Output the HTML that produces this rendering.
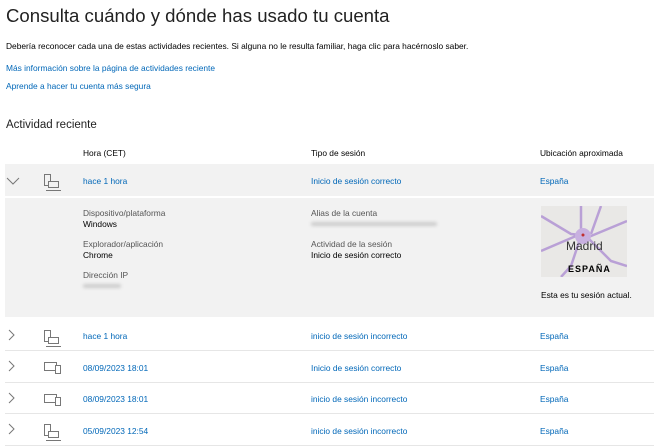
<!DOCTYPE html>
<html><head><meta charset="utf-8"><style>
body{margin:0;width:654px;height:446px;overflow:hidden;background:#fff;font-family:"Liberation Sans",sans-serif;color:#000;position:relative}
.a{position:absolute;white-space:nowrap}
.t{font-size:8.4px}
.l{color:#0067b8}
.g{color:#555}
.bg{position:absolute;left:5px;width:649px;background:#f2f2f2}
.line{position:absolute;left:5px;width:649px;height:1px;background:#e6e6e6}
.blur{position:absolute;height:4px;background:#ccc;filter:blur(1.5px);border-radius:2px}
</style></head><body>
<div class="a" style="left:6px;top:5px;font-size:18.6px;color:#222">Consulta cuándo y dónde has usado tu cuenta</div>
<div class="a t" style="left:6px;top:41px">Debería reconocer cada una de estas actividades recientes. Si alguna no le resulta familiar, haga clic para hacérnoslo saber.</div>
<div class="a t l" style="left:6px;top:63px">Más información sobre la página de actividades reciente</div>
<div class="a t l" style="left:6px;top:81px">Aprende a hacer tu cuenta más segura</div>
<div class="a" style="left:6px;top:119px;font-size:11.5px;color:#222">Actividad reciente</div>
<div class="a t" style="left:83px;top:148px">Hora (CET)</div>
<div class="a t" style="left:311px;top:148px">Tipo de sesión</div>
<div class="a t" style="left:540px;top:148px">Ubicación aproximada</div>
<div class="bg" style="top:164px;height:32px"></div>
<div class="bg" style="top:198px;height:119px"></div>
<svg class="a" style="left:6px;top:176px" width="14" height="10"><path d="M1 2l6 6 6-6" fill="none" stroke="#777" stroke-width="1"/></svg>
<div class="a t l" style="left:83px;top:176px">hace 1 hora</div>
<div class="a t l" style="left:311px;top:176px">Inicio de sesión correcto</div>
<div class="a t l" style="left:540px;top:176px">España</div>
<div class="a t g" style="left:83px;top:208px">Dispositivo/plataforma</div>
<div class="a t" style="left:83px;top:219px">Windows</div>
<div class="a t g" style="left:83px;top:239px">Explorador/aplicación</div>
<div class="a t" style="left:83px;top:250px">Chrome</div>
<div class="a t g" style="left:83px;top:270px">Dirección IP</div>
<div class="blur" style="left:83px;top:284px;width:38px"></div>
<div class="a t g" style="left:311px;top:208px">Alias de la cuenta</div>
<div class="blur" style="left:311px;top:222px;width:126px"></div>
<div class="a t g" style="left:311px;top:239px">Actividad de la sesión</div>
<div class="a t" style="left:311px;top:250px">Inicio de sesión correcto</div>
<div class="a" style="left:541px;top:206px;width:86px;height:71px;background:#e9e8e6;overflow:hidden">
<svg width="86" height="71"><g fill="none" stroke="#b9a0d6" stroke-width="2.5"><path d="M0 10 L30 28 L50 30 L86 15"/><path d="M40 0 L40 30 L30 60 L20 71"/><path d="M45 30 L70 55 L86 60"/><path d="M0 45 L35 30"/><path d="M60 0 L50 28"/></g><circle cx="42" cy="30" r="8" fill="#c8b0e0"/><circle cx="42" cy="29" r="1.5" fill="#c03030"/></svg>
<div class="a" style="left:25px;top:33px;font-size:12px;color:#333">Madrid</div>
<div class="a" style="left:27px;top:58px;font-size:9px;font-weight:bold;letter-spacing:1px">ESPAÑA</div>
</div>
<div class="a t" style="left:541px;top:290px">Esta es tu sesión actual.</div>
<div class="line" style="top:350px"></div>
<div class="line" style="top:382px"></div>
<div class="line" style="top:413px"></div>
<div class="line" style="top:445px"></div>
<svg class="a" style="left:0;top:0" width="654" height="446"><g fill="none" stroke="#777" stroke-width="1">
<path d="M9 330l5 5-5 5M9 361l5 5-5 5M9 393l5 5-5 5M9 424l5 5-5 5"/>
<rect x="44.5" y="174.5" width="6" height="11"/><rect x="48.5" y="181.5" width="10" height="6" fill="#f2f2f2"/><path d="M46 190.5h15"/>
<rect x="44.5" y="330.5" width="6" height="11"/><rect x="48.5" y="337.5" width="10" height="6" fill="#fff"/><path d="M46 346.5h15"/>
<rect x="44.5" y="424.5" width="6" height="11"/><rect x="48.5" y="431.5" width="10" height="6" fill="#fff"/><path d="M46 440.5h15"/>
<rect x="44.5" y="362.5" width="12" height="8"/><rect x="55.5" y="365.5" width="5" height="8" fill="#fff"/>
<rect x="44.5" y="394.5" width="12" height="8"/><rect x="55.5" y="397.5" width="5" height="8" fill="#fff"/>
</g></svg>
<div class="a t l" style="left:83px;top:331px">hace 1 hora</div>
<div class="a t l" style="left:311px;top:331px">inicio de sesión incorrecto</div>
<div class="a t l" style="left:540px;top:331px">España</div>
<div class="a t l" style="left:83px;top:363px">08/09/2023 18:01</div>
<div class="a t l" style="left:311px;top:363px">Inicio de sesión correcto</div>
<div class="a t l" style="left:540px;top:363px">España</div>
<div class="a t l" style="left:83px;top:394px">08/09/2023 18:01</div>
<div class="a t l" style="left:311px;top:394px">inicio de sesión incorrecto</div>
<div class="a t l" style="left:540px;top:394px">España</div>
<div class="a t l" style="left:83px;top:426px">05/09/2023 12:54</div>
<div class="a t l" style="left:311px;top:426px">inicio de sesión incorrecto</div>
<div class="a t l" style="left:540px;top:426px">España</div>
</body></html>
